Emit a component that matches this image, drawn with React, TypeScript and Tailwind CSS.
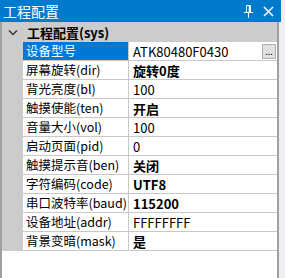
import React from 'react';

const rows: { label: string; value: string; bold?: boolean; selected?: boolean; button?: boolean }[] = [
  { label: '设备型号', value: 'ATK80480F0430', selected: true, button: true },
  { label: '屏幕旋转(dir)', value: '旋转0度', bold: true },
  { label: '背光亮度(bl)', value: '100' },
  { label: '触摸使能(ten)', value: '开启', bold: true },
  { label: '音量大小(vol)', value: '100' },
  { label: '启动页面(pid)', value: '0' },
  { label: '触摸提示音(ben)', value: '关闭', bold: true },
  { label: '字符编码(code)', value: 'UTF8', bold: true },
  { label: '串口波特率(baud)', value: '115200', bold: true },
  { label: '设备地址(addr)', value: 'FFFFFFFF' },
  { label: '背景变暗(mask)', value: '是', bold: true },
];

const PinIcon = () => (
  <svg width="10" height="13" viewBox="0 0 10 13" fill="none" stroke="white" strokeWidth="1">
    <path d="M2.5 0.5h4v7h-4z" />
    <path d="M5.5 1v6.5" strokeWidth="1.5" />
    <path d="M0 7.5h9" />
    <path d="M4.5 8v5" />
  </svg>
);

const CloseIcon = () => (
  <svg width="11" height="11" viewBox="0 0 11 11" stroke="white" strokeWidth="1.5">
    <path d="M1 1l9 9M10 1l-9 9" />
  </svg>
);

const Chevron = () => (
  <svg width="10" height="7" viewBox="0 0 10 7" fill="none" stroke="#333" strokeWidth="1.4">
    <path d="M1 1.5l4 4 4-4" />
  </svg>
);

export default function App() {
  return (
    <div
      className="w-[285px] h-[278px] flex flex-col bg-[#eeeef2] overflow-hidden text-[13px] text-black"
      style={{ fontFamily: '"Noto Sans CJK SC", "Noto Sans", sans-serif' }}
    >
      <div className="w-[281px] h-[22px] flex items-center bg-[#007acc] text-white text-[14px] pl-[3px] pr-[7px] leading-none">
        <span className="flex-1">工程配置</span>
        <span className="mr-[9px] mt-[1px]"><PinIcon /></span>
        <CloseIcon />
      </div>
      <div className="w-[279px] flex-1 flex flex-col border-l-2 border-r-2 border-[#a0a0a0] bg-white">
        <div className="h-[20px] flex items-center bg-[#cccccc] leading-none">
          <span className="w-[21px] flex justify-center"><Chevron /></span>
          <span className="font-bold ml-[4px]">工程配置(sys)</span>
        </div>
        <div className="flex flex-col bg-[#cccccc] pl-[21px]">
          {rows.map((r) => (
            <div key={r.label} className="h-[19px] flex border-b border-[#c8c8c8] bg-white leading-none">
              <div
                className={`w-[106px] flex items-center pl-[3px] border-r border-[#c8c8c8] whitespace-nowrap text-[12.5px] ${
                  r.selected ? 'bg-[#0078d7] text-white' : ''
                }`}
              >
                {r.label}
              </div>
              <div className={`flex-1 flex items-center pl-[4px] ${r.bold ? 'font-bold' : ''}`}>
                <span className="flex-1">{r.value}</span>
                {r.button && (
                  <span className="w-[14px] h-[15px] mr-[1px] flex items-end justify-center bg-[#e1e1e1] border border-[#adadad] text-[9px] font-normal pb-[2px]">
                    ...
                  </span>
                )}
              </div>
            </div>
          ))}
        </div>
        <div className="flex-1 bg-white" />
      </div>
    </div>
  );
}
